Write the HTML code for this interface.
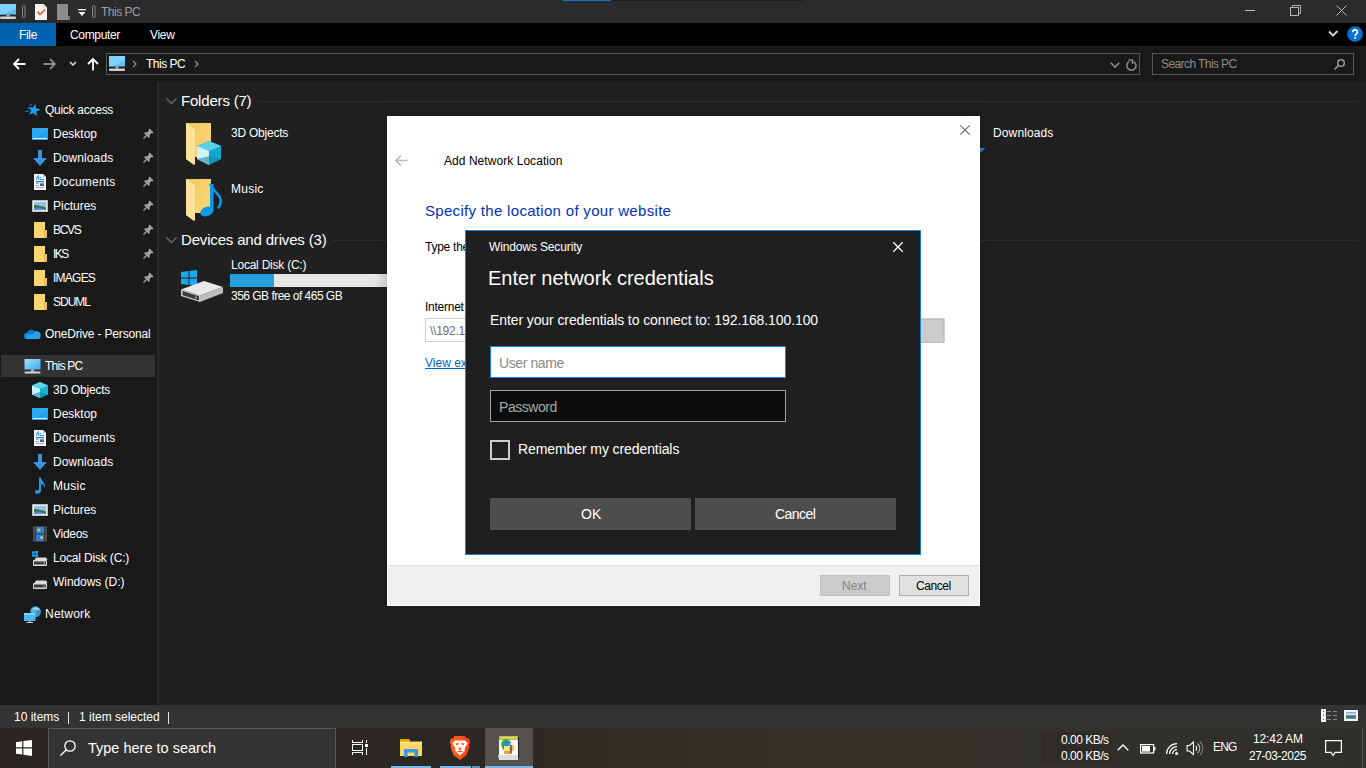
<!DOCTYPE html>
<html><head><meta charset="utf-8">
<style>
*{margin:0;padding:0;box-sizing:border-box}
html,body{width:1366px;height:768px;overflow:hidden;background:#202020;font-family:"Liberation Sans",sans-serif;font-size:12px;color:#fff}
.a{position:absolute}
.t{position:absolute;white-space:nowrap;line-height:1}
svg{position:absolute;overflow:visible}
</style></head><body>
<div class="a" style="left:0px;top:0px;width:1366px;height:23px;background:#2b2b2b;"></div>
<div class="a" style="left:563px;top:0px;width:48px;height:1px;background:#0a78d4;"></div>
<div class="a" style="left:611px;top:0px;width:193px;height:1px;background:#1f1f1f;"></div>
<div class="a" style="left:0px;top:23px;width:1366px;height:23px;background:#000;"></div>
<div class="a" style="left:0px;top:23px;width:56px;height:23px;background:#0063b1;"></div>
<svg style="left:0px;top:4px" width="16" height="16" viewBox="0 0 16 16"><rect x="0" y="0" width="16" height="10.5" fill="#59c2f7"/><path d="M0 0h16v4 L4 10.5 h-4z" fill="#8fdaff" opacity=".7"/><rect x="6.5" y="10.5" width="3" height="2" fill="#bbb"/><rect x="0" y="12.5" width="16" height="2.5" rx="1" fill="#cfcfcf"/></svg>
<svg style="left:22px;top:5px" width="4" height="13" viewBox="0 0 4 13"><rect x="0.5" y="0.5" width="2.5" height="12" rx="1.2" fill="none" stroke="#8a8a8a" stroke-width="1"/></svg>
<svg style="left:92px;top:5px" width="4" height="13" viewBox="0 0 4 13"><rect x="0.5" y="0.5" width="2.5" height="12" rx="1.2" fill="none" stroke="#8a8a8a" stroke-width="1"/></svg>
<svg style="left:35px;top:4px" width="12" height="16" viewBox="0 0 12 16"><path d="M0 0h8.5l3.5 3.5v12.5h-12z" fill="#f2f2f2"/><path d="M8.5 0v3.5h3.5" fill="#d8d8d8"/><path d="M2.5 7.5 L5 10.5 L10 5.5" fill="none" stroke="#f25a22" stroke-width="1.6"/></svg>
<svg style="left:57px;top:4px" width="13" height="16" viewBox="0 0 13 16"><path d="M0 0h11v12h2v4h-13z" fill="#8c8c8c"/><path d="M10.5 12.5h2.5v3.5h-2.5z" fill="#7a7a7a"/></svg>
<svg style="left:78px;top:9px" width="8" height="8" viewBox="0 0 8 8"><rect x="0" y="0" width="8" height="1.3" fill="#fff"/><path d="M0.5 3 L7.5 3 L4 7z" fill="#fff"/></svg>
<div class="t" style="left:101px;top:6px;font-size:12px;color:#9d9d9d;letter-spacing:-0.500px;">This PC</div>
<div class="a" style="left:1245px;top:10px;width:10px;height:1px;background:#c0c0c0;"></div>
<svg style="left:1290px;top:5px" width="11" height="11" viewBox="0 0 11 11"><rect x="0.5" y="2.5" width="8" height="8" fill="none" stroke="#b5b5b5"/><path d="M2.5 2.5 V0.5 H10.5 V8.5 H8.5" fill="none" stroke="#b5b5b5"/></svg>
<svg style="left:1336px;top:5px" width="11" height="11" viewBox="0 0 11 11"><path d="M0.5 0.5 L10.5 10.5 M10.5 0.5 L0.5 10.5" stroke="#c0c0c0" stroke-width="1"/></svg>
<svg style="left:1328px;top:30px" width="11" height="7" viewBox="0 0 11 7"><path d="M1 1.5 L5 5.5 L9.5 1" fill="none" stroke="#cccccc" stroke-width="2"/></svg>
<svg style="left:1347px;top:26px" width="16" height="16" viewBox="0 0 16 16"><circle cx="8" cy="8" r="7.8" fill="#0a6fd0"/><path d="M5.7 6.2 C5.7 3.2 10.5 3.2 10.5 6 C10.5 7.8 8.2 8 8.2 10" fill="none" stroke="#fff" stroke-width="1.7"/><rect x="7.3" y="11" width="1.8" height="1.8" fill="#fff"/></svg>
<div class="t" style="left:19px;top:29px;font-size:12px;color:#fff;letter-spacing:-0.333px;">File</div>
<div class="t" style="left:70px;top:29px;font-size:12px;color:#fff;letter-spacing:-0.343px;">Computer</div>
<div class="t" style="left:150px;top:29px;font-size:12px;color:#fff;letter-spacing:-0.333px;">View</div>
<div class="a" style="left:0px;top:46px;width:1366px;height:36px;background:#191919;"></div>
<svg style="left:13px;top:58px" width="13" height="12" viewBox="0 0 13 12"><path d="M6 1 L1 6 L6 11 M1 6 H12.5" fill="none" stroke="#fff" stroke-width="1.8"/></svg>
<svg style="left:43px;top:58px" width="13" height="12" viewBox="0 0 13 12"><path d="M7 1 L12 6 L7 11 M12 6 H0.5" fill="none" stroke="#8a8a8a" stroke-width="1.8"/></svg>
<svg style="left:69px;top:61px" width="8" height="5" viewBox="0 0 8 5"><path d="M1 1 L4 4 L7 1" fill="none" stroke="#e0e0e0" stroke-width="1.5"/></svg>
<svg style="left:87px;top:58px" width="12" height="13" viewBox="0 0 12 13"><path d="M1 6 L6 1 L11 6 M6 1 V12.5" fill="none" stroke="#fff" stroke-width="1.8"/></svg>
<div class="a" style="left:106px;top:53px;width:1034px;height:22px;border:1px solid #575757;background:#191919"></div>
<svg style="left:109px;top:56px" width="16" height="16" viewBox="0 0 16 16"><rect x="0" y="0" width="16" height="10.5" fill="#59c2f7"/><path d="M0 0h16v4 L4 10.5 h-4z" fill="#8fdaff" opacity=".7"/><rect x="6.5" y="10.5" width="3" height="2" fill="#bbb"/><rect x="0" y="12.5" width="16" height="2.5" rx="1" fill="#cfcfcf"/></svg>
<svg style="left:132px;top:60px" width="5" height="8" viewBox="0 0 5 8"><path d="M1 1 L4 4 L1 7" fill="none" stroke="#8a8a8a" stroke-width="1.3"/></svg>
<div class="t" style="left:146px;top:58px;font-size:12px;color:#fff;letter-spacing:-0.500px;">This PC</div>
<svg style="left:194px;top:60px" width="5" height="8" viewBox="0 0 5 8"><path d="M1 1 L4 4 L1 7" fill="none" stroke="#8a8a8a" stroke-width="1.3"/></svg>
<svg style="left:1110px;top:62px" width="10" height="6" viewBox="0 0 10 6"><path d="M0.8 0.8 L5 5 L9.2 0.8" fill="none" stroke="#8c8c8c" stroke-width="1.6"/></svg>
<div class="a" style="left:1122px;top:54px;width:1px;height:20px;background:#141414;"></div>
<svg style="left:1126px;top:59px" width="12" height="12" viewBox="0 0 12 12"><path d="M7.6 2.6 A4.6 4.6 0 1 1 3.2 2.6" fill="none" stroke="#8c8c8c" stroke-width="1.5"/><path d="M2.5 1 H6.5 V5" fill="none" stroke="#8c8c8c" stroke-width="1.5"/></svg>
<div class="a" style="left:1152px;top:53px;width:202px;height:22px;border:1px solid #575757;background:#191919"></div>
<div class="t" style="left:1161px;top:58px;font-size:12px;color:#8c8c8c;letter-spacing:-0.585px;">Search This PC</div>
<svg style="left:1333px;top:58px" width="12" height="12" viewBox="0 0 12 12"><circle cx="8" cy="5" r="3.3" fill="none" stroke="#9a9a9a" stroke-width="1.5"/><path d="M5.6 7.4 L1.5 11.5" stroke="#9a9a9a" stroke-width="1.6"/></svg>
<div class="a" style="left:0px;top:82px;width:157px;height:623px;background:#191919;"></div>
<div class="a" style="left:157px;top:82px;width:2px;height:623px;background:#282828;"></div>
<div class="a" style="left:159px;top:82px;width:1207px;height:623px;background:#202020;"></div>
<div class="a" style="left:1px;top:355px;width:154px;height:22px;background:#333333;"></div>
<svg style="left:25px;top:103px" width="16" height="14" viewBox="0 0 16 14"><path d="M10.37 0.74 L11.08 5.33 L15.56 6.51 L11.42 8.60 L11.68 13.23 L8.42 9.94 L4.10 11.62 L6.22 7.49 L3.28 3.90 L7.86 4.64Z" fill="#1e9ff2"/><path d="M4.5 2.3 L7 1.8 M2.5 5.5 L5.5 5 M0.5 8.5 L4 8" stroke="#1e9ff2" stroke-width="1" opacity=".8"/></svg>
<div class="t" style="left:45px;top:104px;font-size:12px;color:#fff;letter-spacing:-0.273px;">Quick access</div>
<svg style="left:32px;top:128px" width="16" height="12" viewBox="0 0 16 12"><rect x="0" y="0" width="16" height="12" fill="#1ea1f1"/><path d="M0 0 L16 0 L16 2 L2 12 L0 12Z" fill="#36aff5" opacity=".6"/><rect x="1" y="10" width="14" height="1" fill="#e8f6ff"/></svg>
<div class="t" style="left:53px;top:128px;font-size:12px;color:#fff;letter-spacing:0.000px;">Desktop</div>
<svg style="left:143px;top:128px" width="11" height="11" viewBox="0 0 11 11"><path d="M6.5 0.5 L10.5 4.5 L9.5 5.5 L8.5 5 L6.5 7 L6.8 9 L5.8 10 L1 5.2 L2 4.2 L4 4.5 L6 2.5 L5.5 1.5Z" fill="#9ea5aa"/><path d="M3.5 7.5 L0.5 10.5" stroke="#9ea5aa" stroke-width="1.2"/></svg>
<svg style="left:32px;top:150px" width="16" height="16" viewBox="0 0 16 16"><path d="M6 0h4v8h5l-7 8l-7-8h5z" fill="#3d92e0"/></svg>
<div class="t" style="left:53px;top:152px;font-size:12px;color:#fff;letter-spacing:0.100px;">Downloads</div>
<svg style="left:143px;top:152px" width="11" height="11" viewBox="0 0 11 11"><path d="M6.5 0.5 L10.5 4.5 L9.5 5.5 L8.5 5 L6.5 7 L6.8 9 L5.8 10 L1 5.2 L2 4.2 L4 4.5 L6 2.5 L5.5 1.5Z" fill="#9ea5aa"/><path d="M3.5 7.5 L0.5 10.5" stroke="#9ea5aa" stroke-width="1.2"/></svg>
<svg style="left:34px;top:174px" width="12" height="16" viewBox="0 0 12 16"><path d="M0 0h9l3 3v13h-12z" fill="#f6f6f6"/><path d="M9 0v3h3z" fill="#cfcfcf"/><path d="M2 6 L4 1.5 L5 6" fill="none" stroke="#1e8fe0" stroke-width="1"/><rect x="6" y="3" width="1" height="1" fill="#1e8fe0"/><rect x="6" y="5" width="4" height="1" fill="#1e8fe0"/><rect x="2" y="7" width="8" height="1.2" fill="#0a78d4"/><rect x="2" y="9" width="2.5" height="1" fill="#999"/><rect x="2" y="11" width="2.5" height="1" fill="#999"/><rect x="2" y="13" width="8" height="1" fill="#aaa"/><rect x="6" y="9" width="4" height="3" fill="#3f7a55"/><rect x="6" y="9" width="4" height="1" fill="#5aa0e0"/></svg>
<div class="t" style="left:53px;top:176px;font-size:12px;color:#fff;letter-spacing:0.200px;">Documents</div>
<svg style="left:143px;top:176px" width="11" height="11" viewBox="0 0 11 11"><path d="M6.5 0.5 L10.5 4.5 L9.5 5.5 L8.5 5 L6.5 7 L6.8 9 L5.8 10 L1 5.2 L2 4.2 L4 4.5 L6 2.5 L5.5 1.5Z" fill="#9ea5aa"/><path d="M3.5 7.5 L0.5 10.5" stroke="#9ea5aa" stroke-width="1.2"/></svg>
<svg style="left:32px;top:200px" width="16" height="12" viewBox="0 0 16 12"><rect x="0" y="0" width="16" height="12" fill="#ececec"/><rect x="0.5" y="0.5" width="15" height="11" fill="none" stroke="#9a9a9a" stroke-width=".6"/><rect x="2" y="2" width="12" height="8" fill="#8cc4ef"/><path d="M2 5 Q6 4.5 14 7.5 V10 H2z" fill="#3f7350"/><path d="M2 8 Q8 7 14 9.5 V10 H2z" fill="#5a8fd0"/></svg>
<div class="t" style="left:53px;top:200px;font-size:12px;color:#fff;letter-spacing:0.000px;">Pictures</div>
<svg style="left:143px;top:200px" width="11" height="11" viewBox="0 0 11 11"><path d="M6.5 0.5 L10.5 4.5 L9.5 5.5 L8.5 5 L6.5 7 L6.8 9 L5.8 10 L1 5.2 L2 4.2 L4 4.5 L6 2.5 L5.5 1.5Z" fill="#9ea5aa"/><path d="M3.5 7.5 L0.5 10.5" stroke="#9ea5aa" stroke-width="1.2"/></svg>
<svg style="left:34px;top:222px" width="14" height="16" viewBox="0 0 14 16"><path d="M0 0h11v14h2v2h-13z" fill="#f9d56f"/><path d="M10 8 h3 v8 h-3z" fill="#eec158"/><path d="M11 9 L11 16" stroke="#d7a945" stroke-width=".6"/></svg>
<div class="t" style="left:53px;top:224px;font-size:12px;color:#fff;letter-spacing:-1.333px;">BCVS</div>
<svg style="left:143px;top:224px" width="11" height="11" viewBox="0 0 11 11"><path d="M6.5 0.5 L10.5 4.5 L9.5 5.5 L8.5 5 L6.5 7 L6.8 9 L5.8 10 L1 5.2 L2 4.2 L4 4.5 L6 2.5 L5.5 1.5Z" fill="#9ea5aa"/><path d="M3.5 7.5 L0.5 10.5" stroke="#9ea5aa" stroke-width="1.2"/></svg>
<svg style="left:34px;top:246px" width="14" height="16" viewBox="0 0 14 16"><path d="M0 0h11v14h2v2h-13z" fill="#f9d56f"/><path d="M10 8 h3 v8 h-3z" fill="#eec158"/><path d="M11 9 L11 16" stroke="#d7a945" stroke-width=".6"/></svg>
<div class="t" style="left:53px;top:248px;font-size:12px;color:#fff;letter-spacing:-1.500px;">IKS</div>
<svg style="left:143px;top:248px" width="11" height="11" viewBox="0 0 11 11"><path d="M6.5 0.5 L10.5 4.5 L9.5 5.5 L8.5 5 L6.5 7 L6.8 9 L5.8 10 L1 5.2 L2 4.2 L4 4.5 L6 2.5 L5.5 1.5Z" fill="#9ea5aa"/><path d="M3.5 7.5 L0.5 10.5" stroke="#9ea5aa" stroke-width="1.2"/></svg>
<svg style="left:34px;top:270px" width="14" height="16" viewBox="0 0 14 16"><path d="M0 0h11v14h2v2h-13z" fill="#f9d56f"/><path d="M10 8 h3 v8 h-3z" fill="#eec158"/><path d="M11 9 L11 16" stroke="#d7a945" stroke-width=".6"/></svg>
<div class="t" style="left:53px;top:272px;font-size:12px;color:#fff;letter-spacing:-0.760px;">IMAGES</div>
<svg style="left:143px;top:272px" width="11" height="11" viewBox="0 0 11 11"><path d="M6.5 0.5 L10.5 4.5 L9.5 5.5 L8.5 5 L6.5 7 L6.8 9 L5.8 10 L1 5.2 L2 4.2 L4 4.5 L6 2.5 L5.5 1.5Z" fill="#9ea5aa"/><path d="M3.5 7.5 L0.5 10.5" stroke="#9ea5aa" stroke-width="1.2"/></svg>
<svg style="left:34px;top:294px" width="14" height="16" viewBox="0 0 14 16"><path d="M0 0h11v14h2v2h-13z" fill="#f9d56f"/><path d="M10 8 h3 v8 h-3z" fill="#eec158"/><path d="M11 9 L11 16" stroke="#d7a945" stroke-width=".6"/></svg>
<div class="t" style="left:53px;top:296px;font-size:12px;color:#fff;letter-spacing:-1.000px;">SDUML</div>
<svg style="left:24px;top:328px" width="17" height="11" viewBox="0 0 17 11"><path d="M3 11 A3 3 0 0 1 2.5 5 A5 5 0 0 1 11 3.5 A3.5 3.5 0 0 1 16 7.5 A3 3 0 0 1 14 11z" fill="#0f78d4"/><path d="M3 11 A3 3 0 0 1 3 6.5 L9 6.5 A3.5 3.5 0 0 1 16.5 8.5 A2.5 2.5 0 0 1 14 11z" fill="#2aa1ec"/></svg>
<div class="t" style="left:45px;top:328px;font-size:12px;color:#fff;letter-spacing:-0.167px;">OneDrive - Personal</div>
<svg style="left:24px;top:359px" width="17" height="16" viewBox="0 0 17 16"><defs><linearGradient id="pcg" x1="0" y1="0" x2="1" y2="1"><stop offset="0" stop-color="#9fe0ff"/><stop offset="1" stop-color="#3aaef0"/></linearGradient></defs><rect x="0.5" y="0" width="16" height="10.5" fill="url(#pcg)"/><rect x="7" y="10.5" width="3" height="2" fill="#c8c8c8"/><rect x="0.5" y="12.5" width="16" height="2" rx="1" fill="#d8d8d8"/></svg>
<div class="t" style="left:45px;top:360px;font-size:12px;color:#fff;letter-spacing:-0.733px;">This PC</div>
<svg style="left:32px;top:382px" width="16" height="16" viewBox="0 0 16 16"><path d="M8 0 L16 3.5 L16 12.5 L8 16 L0 12.5 L0 3.5Z" fill="#19b3d2"/><path d="M8 0 L16 3.5 L8 7 L0 3.5Z" fill="#5fd3ea"/><path d="M0 3.5 L8 7 L8 16 L0 12.5Z" fill="#c9f1f8"/><path d="M8 10 L16 12.5 L8 16 L0 12.5Z" fill="#0d8ca9" opacity=".6"/></svg>
<div class="t" style="left:53px;top:384px;font-size:12px;color:#fff;letter-spacing:-0.222px;">3D Objects</div>
<svg style="left:32px;top:408px" width="16" height="12" viewBox="0 0 16 12"><rect x="0" y="0" width="16" height="12" fill="#1ea1f1"/><path d="M0 0 L16 0 L16 2 L2 12 L0 12Z" fill="#36aff5" opacity=".6"/><rect x="1" y="10" width="14" height="1" fill="#e8f6ff"/></svg>
<div class="t" style="left:53px;top:408px;font-size:12px;color:#fff;letter-spacing:0.000px;">Desktop</div>
<svg style="left:34px;top:430px" width="12" height="16" viewBox="0 0 12 16"><path d="M0 0h9l3 3v13h-12z" fill="#f6f6f6"/><path d="M9 0v3h3z" fill="#cfcfcf"/><path d="M2 6 L4 1.5 L5 6" fill="none" stroke="#1e8fe0" stroke-width="1"/><rect x="6" y="3" width="1" height="1" fill="#1e8fe0"/><rect x="6" y="5" width="4" height="1" fill="#1e8fe0"/><rect x="2" y="7" width="8" height="1.2" fill="#0a78d4"/><rect x="2" y="9" width="2.5" height="1" fill="#999"/><rect x="2" y="11" width="2.5" height="1" fill="#999"/><rect x="2" y="13" width="8" height="1" fill="#aaa"/><rect x="6" y="9" width="4" height="3" fill="#3f7a55"/><rect x="6" y="9" width="4" height="1" fill="#5aa0e0"/></svg>
<div class="t" style="left:53px;top:432px;font-size:12px;color:#fff;letter-spacing:0.200px;">Documents</div>
<svg style="left:32px;top:454px" width="16" height="16" viewBox="0 0 16 16"><path d="M6 0h4v8h5l-7 8l-7-8h5z" fill="#3d92e0"/></svg>
<div class="t" style="left:53px;top:456px;font-size:12px;color:#fff;letter-spacing:0.100px;">Downloads</div>
<svg style="left:34px;top:477px" width="12" height="17" viewBox="0 0 12 17"><path d="M5 0.5 L7 0.5 C7 4 12 6 11 11 C10.5 8 8.5 7 7 7 L7 14 C7 16 4 17.3 2 16.6 C0 16 0.5 13.5 3 13 C4 12.8 5 13 5 13z" fill="#1a9ae8"/></svg>
<div class="t" style="left:53px;top:480px;font-size:12px;color:#fff;letter-spacing:0.300px;">Music</div>
<svg style="left:32px;top:504px" width="16" height="12" viewBox="0 0 16 12"><rect x="0" y="0" width="16" height="12" fill="#ececec"/><rect x="0.5" y="0.5" width="15" height="11" fill="none" stroke="#9a9a9a" stroke-width=".6"/><rect x="2" y="2" width="12" height="8" fill="#8cc4ef"/><path d="M2 5 Q6 4.5 14 7.5 V10 H2z" fill="#3f7350"/><path d="M2 8 Q8 7 14 9.5 V10 H2z" fill="#5a8fd0"/></svg>
<div class="t" style="left:53px;top:504px;font-size:12px;color:#fff;letter-spacing:0.000px;">Pictures</div>
<svg style="left:33px;top:526px" width="14" height="16" viewBox="0 0 14 16"><rect x="0" y="0" width="14" height="16" fill="#3a3a3a"/><rect x="3" y="1" width="8" height="6.5" fill="#2f7ed8"/><rect x="3" y="8.5" width="8" height="6.5" fill="#2f7ed8"/><circle cx="6" cy="4" r="1.5" fill="#e8c040"/><circle cx="8.5" cy="11.5" r="1.5" fill="#e8c040"/><path d="M1 1.5v13M13 1.5v13" stroke="#888" stroke-dasharray="1 1" stroke-width="1"/></svg>
<div class="t" style="left:53px;top:528px;font-size:12px;color:#fff;letter-spacing:-0.280px;">Videos</div>
<svg style="left:32px;top:551px" width="16" height="15" viewBox="0 0 16 15"><path d="M0 0.5 L2.8 0.2 V2.8 H0z M3.3 0.1 L6 0 V2.8 H3.3z M0 3.3 H2.8 V5.9 L0 5.6z M3.3 3.3 H6 V6 L3.3 5.9z" fill="#1aa8ee"/><path d="M2.5 9 L4 6.5 L14 6.5 L15.5 9z" fill="#dedede"/><rect x="1" y="9" width="14" height="6" rx="1" fill="#d9d9d9"/><rect x="2" y="10.5" width="12" height="3" fill="#3a3a3a"/><rect x="11.5" y="11.3" width="1.5" height="1.5" fill="#4cd65c"/></svg>
<div class="t" style="left:53px;top:552px;font-size:12px;color:#fff;letter-spacing:-0.171px;">Local Disk (C:)</div>
<svg style="left:32px;top:580px" width="16" height="9" viewBox="0 0 16 9"><path d="M2.5 3 L4 0.5 L14 0.5 L15.5 3z" fill="#dedede"/><rect x="1" y="3" width="14" height="6" rx="1" fill="#d9d9d9"/><rect x="2" y="4.5" width="12" height="3" fill="#3a3a3a"/><rect x="11.5" y="5.3" width="1.5" height="1.5" fill="#4cd65c"/></svg>
<div class="t" style="left:53px;top:576px;font-size:12px;color:#fff;letter-spacing:-0.055px;">Windows (D:)</div>
<svg style="left:23px;top:606px" width="18" height="17" viewBox="0 0 18 17"><circle cx="12.5" cy="5.8" r="5.5" fill="#3f8fc9"/><path d="M8 3.5 A5.5 5.5 0 0 1 17.5 4.5 C15 3.5 11 4 8 3.5z" fill="#9fd6f5"/><circle cx="11" cy="4.5" r="2.5" fill="#7cc3ee" opacity=".6"/><rect x="1" y="7" width="11.5" height="8" fill="#4cb8f5"/><rect x="1" y="7" width="11.5" height="2" fill="#7fd0fa"/><rect x="6" y="15" width="1.5" height="1" fill="#bbb"/><rect x="3.5" y="16" width="6.5" height="1" fill="#d0d0d0"/></svg>
<div class="t" style="left:45px;top:608px;font-size:12px;color:#fff;letter-spacing:0.217px;">Network</div>
<svg style="left:166px;top:98px" width="11" height="7" viewBox="0 0 11 7"><path d="M0.5 0.5 L5.5 5.5 L10.5 0.5" fill="none" stroke="#6a6a6a" stroke-width="1.3"/></svg>
<div class="t" style="left:181px;top:93px;font-size:15px;color:#fff;letter-spacing:-0.190px;">Folders (7)</div>
<div class="a" style="left:258px;top:101px;width:1100px;height:1px;background:#2f2f2f;"></div>
<svg style="left:166px;top:237px" width="11" height="7" viewBox="0 0 11 7"><path d="M0.5 0.5 L5.5 5.5 L10.5 0.5" fill="none" stroke="#6a6a6a" stroke-width="1.3"/></svg>
<div class="t" style="left:181px;top:232px;font-size:15px;color:#fff;letter-spacing:-0.171px;">Devices and drives (3)</div>
<div class="a" style="left:333px;top:240px;width:1025px;height:1px;background:#2f2f2f;"></div>
<svg style="left:186px;top:123px" width="36" height="42" viewBox="0 0 36 42"><defs><linearGradient id="fg123" x1="0" y1="0" x2="1" y2="1"><stop offset="0" stop-color="#f2c65e"/><stop offset="1" stop-color="#fddc7e"/></linearGradient></defs><path d="M0 0 H25 V34 H8 V42 L0 36Z" fill="url(#fg123)"/><path d="M0 0 L9 7 L9 42 L0 36Z" fill="#fde39c"/><path d="M0 0 L9 7 L9 8 L0 1.5Z" fill="#fff0c0" opacity=".6"/></svg>
<svg style="left:197px;top:141px" width="24" height="24" viewBox="0 0 24 24"><path d="M12 0 L24 5 L24 18 L12 24 L0 18 L0 5Z" fill="#12a9cf"/><path d="M12 0 L24 5 L12 10 L0 5Z" fill="#5bd0e9"/><path d="M0 5 L12 10 L12 24 L0 18Z" fill="#d0f2f8"/><path d="M12 15 L24 18 L12 24 L0 18Z" fill="#0b86a4" opacity=".55"/></svg>
<div class="t" style="left:231px;top:127px;font-size:12px;color:#fff;letter-spacing:-0.222px;">3D Objects</div>
<svg style="left:186px;top:179px" width="36" height="42" viewBox="0 0 36 42"><defs><linearGradient id="fg179" x1="0" y1="0" x2="1" y2="1"><stop offset="0" stop-color="#f2c65e"/><stop offset="1" stop-color="#fddc7e"/></linearGradient></defs><path d="M0 0 H25 V34 H8 V42 L0 36Z" fill="url(#fg179)"/><path d="M0 0 L9 7 L9 42 L0 36Z" fill="#fde39c"/><path d="M0 0 L9 7 L9 8 L0 1.5Z" fill="#fff0c0" opacity=".6"/></svg>
<svg style="left:198px;top:183px" width="25" height="36" viewBox="0 0 25 36"><rect x="12" y="1" width="3.5" height="27" fill="#0a98ea"/><path d="M12.5 1.5 C14 8 23.5 11 22.8 19 C22.5 21.5 21.8 23 20.5 24.5" fill="none" stroke="#0a98ea" stroke-width="2.6" stroke-linecap="round"/><ellipse cx="8.8" cy="28.5" rx="6.8" ry="4.6" transform="rotate(-22 8.8 28.5)" fill="#0a98ea"/></svg>
<div class="t" style="left:231px;top:183px;font-size:12px;color:#fff;letter-spacing:0.250px;">Music</div>
<svg style="left:980px;top:148px" width="6" height="5" viewBox="0 0 6 5"><path d="M0 0 H5.5 L0 5z" fill="#2f86d6"/></svg>
<div class="t" style="left:993px;top:127px;font-size:12px;color:#fff;letter-spacing:0.125px;">Downloads</div>
<svg style="left:181px;top:270px" width="43" height="33" viewBox="0 0 43 33"><path d="M0 2 L7.5 1 V7.5 H0z M8.5 0.9 L16 0 V7.5 H8.5z M0 8.5 H7.5 V15 L0 14z M8.5 8.5 H16 V16 L8.5 15.1z" fill="#1aa8ee"/>
<path d="M0 19.5 L23 11 L42 17 L19 25.5Z" fill="#e9e9e9"/>
<path d="M19 25.5 L42 17 L42 23 L19 32Z" fill="#bdbdbd"/>
<path d="M0 19.5 L19 25.5 L19 32 L0 26Z" fill="#cfcfcf"/>
<path d="M1.5 21 L18 26.3 L18 30.5 L1.5 25.2Z" fill="#3c3c3c"/>
<circle cx="15" cy="27.5" r="1" fill="#4fe04f"/></svg>
<div class="t" style="left:231px;top:259px;font-size:12px;color:#fff;letter-spacing:-0.229px;">Local Disk (C:)</div>
<div class="a" style="left:230px;top:274px;width:160px;height:13px;background:#e6e6e6;"></div>
<div class="a" style="left:230px;top:274px;width:44px;height:13px;background:#26a0da;"></div>
<div class="t" style="left:231px;top:290px;font-size:12px;color:#fff;letter-spacing:-0.520px;">356 GB free of 465 GB</div>
<div class="a" style="left:0px;top:705px;width:1366px;height:23px;background:#333333;"></div>
<div class="t" style="left:14px;top:711px;font-size:12px;color:#fff;letter-spacing:0.000px;">10 items</div>
<div class="a" style="left:68px;top:712px;width:1px;height:12px;background:#e0e0e0;"></div>
<div class="t" style="left:79px;top:711px;font-size:12px;color:#fff;letter-spacing:0.000px;">1 item selected</div>
<div class="a" style="left:168px;top:712px;width:1px;height:12px;background:#e0e0e0;"></div>
<div class="a" style="left:1321px;top:709px;width:5px;height:13px;background:#f4f4f4;"></div>
<div class="a" style="left:1323px;top:711px;width:1px;height:1px;background:#3a7a5a;"></div>
<div class="a" style="left:1323px;top:715px;width:1px;height:1px;background:#3a7ae0;"></div>
<div class="a" style="left:1323px;top:719px;width:1px;height:1px;background:#e02020;"></div>
<div class="a" style="left:1327px;top:711px;width:4px;height:1px;background:#8a8a8a;"></div>
<div class="a" style="left:1333px;top:711px;width:4px;height:1px;background:#8a8a8a;"></div>
<div class="a" style="left:1327px;top:715px;width:4px;height:1px;background:#8a8a8a;"></div>
<div class="a" style="left:1333px;top:715px;width:4px;height:1px;background:#8a8a8a;"></div>
<div class="a" style="left:1327px;top:719px;width:4px;height:1px;background:#8a8a8a;"></div>
<div class="a" style="left:1333px;top:719px;width:4px;height:1px;background:#8a8a8a;"></div>
<div class="a" style="left:1344px;top:710px;width:14px;height:11px;background:#f4f4f4;"></div>
<div class="a" style="left:1346px;top:712px;width:10px;height:7px;background:linear-gradient(#5a9ef0 0,#d8ecff 35%,#3f7350 55%,#6090c0 100%)"></div>
<div class="a" style="left:0;top:728px;width:1366px;height:40px;background:linear-gradient(to right,#2a2621 0px,#2b2722 480px,#2f2c24 620px,#35322a 800px,#35322b 950px,#33312d 1040px,#302e2a 1366px)"></div>
<div class="a" style="left:48px;top:728px;width:288px;height:40px;border:1px solid #5a5a5a;border-bottom:none;background:#333333"></div>
<svg style="left:16px;top:740px" width="16" height="16" viewBox="0 0 16 16"><path d="M0 2.2 L6.2 1.3 V7.2 H0z M7.4 1.1 L16 0 V7.2 H7.4z M0 8.4 H6.2 V14.5 L0 13.7z M7.4 8.4 H16 V16 L7.4 14.8z" fill="#fff"/></svg>
<svg style="left:60px;top:740px" width="16" height="16" viewBox="0 0 16 16"><circle cx="10" cy="6" r="5.2" fill="none" stroke="#fff" stroke-width="1.3"/><path d="M6.3 9.7 L0.5 15.5" stroke="#fff" stroke-width="1.4"/></svg>
<div class="t" style="left:88px;top:741px;font-size:14.5px;color:#fff;letter-spacing:0.000px;">Type here to search</div>
<div class="a" style="left:352px;top:740px;width:1px;height:3px;background:#fff;"></div>
<div class="a" style="left:362px;top:740px;width:1px;height:3px;background:#fff;"></div>
<div class="a" style="left:352px;top:742px;width:11px;height:1px;background:#fff;"></div>
<div class="a" style="left:352px;top:744px;width:11px;height:7px;border:1px solid #fff"></div>
<div class="a" style="left:352px;top:752px;width:11px;height:1px;background:#fff;"></div>
<div class="a" style="left:352px;top:752px;width:1px;height:3px;background:#fff;"></div>
<div class="a" style="left:362px;top:752px;width:1px;height:3px;background:#fff;"></div>
<div class="a" style="left:366px;top:740px;width:1px;height:3px;background:#fff;"></div>
<div class="a" style="left:365px;top:744px;width:3px;height:3px;background:#fff;"></div>
<div class="a" style="left:366px;top:748px;width:1px;height:7px;background:#fff;"></div>
<svg style="left:400px;top:739px" width="22" height="18" viewBox="0 0 22 18"><path d="M0 0 H9 L10 1 V3 H0z" fill="#e6a100"/><path d="M0 2.5 H22 V17 H0z" fill="#fdd663"/><path d="M0 3 H22 V5 H0z" fill="#ffe07a"/><path d="M4 18 V11 Q4 10 5 10 H17 Q18 10 18 11 V18 H14.5 V13.5 H7.5 V18z" fill="#3a96e0"/></svg>
<div class="a" style="left:391px;top:766px;width:40px;height:2px;background:#76b9ed;"></div>
<svg style="left:449px;top:735px" width="22" height="26" viewBox="0 0 22 26"><defs><linearGradient id="bg1" x1="0" x2="1"><stop offset="0" stop-color="#ff6a10"/><stop offset="1" stop-color="#ff3a1a"/></linearGradient></defs><path d="M5.5 1 H15.5 L17.5 3 L20.5 4 L21 7.5 L20 10 L20.5 12 L17.5 20 L11 25 L4.5 20 L1.5 12 L2 10 L1 7.5 L1.5 4 L4.5 3 Z" fill="url(#bg1)"/><path d="M3.5 8 L6 5.5 H16 L18.5 8 L17.5 10.5 L16 12 L15.5 16.5 L13.5 18 L11 20.5 L8.5 18 L6.5 16.5 L6 12 L4.5 10.5 Z" fill="#fff"/><path d="M6.5 8.3 H10 L9.2 9.8 L7.2 10z M15.5 8.3 H12 L12.8 9.8 L14.8 10z M9.8 11.5 L11 13.8 L12.2 11.5 L12.5 14.2 L11 15 L9.5 14.2z M7.5 16.5 L11 15.5 L14.5 16.5 L11 17.5z" fill="#ff4a1a"/></svg>
<div class="a" style="left:440px;top:766px;width:31px;height:2px;background:#76b9ed;"></div>
<div class="a" style="left:472px;top:766px;width:8px;height:2px;background:#5a8fc0;"></div>
<div class="a" style="left:485px;top:728px;width:48px;height:40px;background:#55514c;"></div>
<svg style="left:498px;top:736px" width="22" height="25" viewBox="0 0 22 25"><rect x="1" y="0" width="19" height="4" fill="#c2bb3a"/><rect x="2" y="1.3" width="17" height="1" fill="#f0eca0"/><rect x="1" y="4" width="19" height="16" fill="#f8f8f4"/><rect x="20" y="1" width="1" height="21" fill="#222"/><path d="M0 19 H20 V24 H1z" fill="#dcdcdc"/><path d="M3.5 10 A5 5 0 0 1 13 6.5 L9 11 L5 14z" fill="#32b040"/><circle cx="9" cy="8.5" r="3.5" fill="#2a86e0" opacity=".85"/><rect x="6" y="10" width="7" height="7.5" fill="#f4e48a"/><rect x="6" y="15" width="7" height="3" fill="#d8a848"/><rect x="11" y="9" width="5" height="6" fill="#e8c860"/><path d="M13 17.5 V9" stroke="#111" stroke-width="1"/></svg>
<div class="a" style="left:485px;top:766px;width:48px;height:2px;background:#76b9ed;"></div>
<div class="a" style="left:1041px;top:732px;width:72px;height:32px;background:#2f2c27;"></div>
<div class="t" style="left:1061px;top:734px;font-size:12px;color:#fff;letter-spacing:-0.500px;">0.00 KB/s</div>
<div class="t" style="left:1061px;top:750px;font-size:12px;color:#fff;letter-spacing:-0.500px;">0.00 KB/s</div>
<svg style="left:1117px;top:744px" width="12" height="7" viewBox="0 0 12 7"><path d="M0.7 6.3 L6 1 L11.3 6.3" fill="none" stroke="#fff" stroke-width="1.3"/></svg>
<svg style="left:1140px;top:744px" width="16" height="10" viewBox="0 0 16 10"><rect x="0.6" y="0.6" width="13" height="8.4" fill="none" stroke="#fff" stroke-width="1.2"/><rect x="2" y="2" width="8" height="5.6" fill="#fff"/><rect x="14" y="3" width="1.4" height="3.5" fill="#fff"/></svg>
<svg style="left:1165px;top:742px" width="14" height="14" viewBox="0 0 14 14"><path d="M1.6 12 A10.4 10.4 0 0 1 12 1.6 M4.6 12 A7.4 7.4 0 0 1 12 4.6 M7.6 12 A4.4 4.4 0 0 1 12 7.6" fill="none" stroke="#fff" stroke-width="1.2"/><circle cx="11.6" cy="11.6" r="1.5" fill="#fff"/></svg>
<svg style="left:1186px;top:741px" width="19" height="15" viewBox="0 0 19 15"><path d="M1.1 4.5 H3.5 L7.5 1 V13.5 L3.5 10 H1.1z" fill="none" stroke="#fff" stroke-width="1.1"/><path d="M9.7 5 A3 3 0 0 1 9.7 9.5" fill="none" stroke="#fff" stroke-width="1.1"/><path d="M11.5 2.5 A6 6 0 0 1 11.5 12" fill="none" stroke="#bbb" stroke-width="1.1"/><path d="M13.8 0.5 A9 9 0 0 1 13.8 14" fill="none" stroke="#777" stroke-width="1.1"/></svg>
<div class="t" style="left:1213px;top:741px;font-size:12px;color:#fff;letter-spacing:-0.800px;">ENG</div>
<div class="t" style="left:1253px;top:733px;font-size:12px;color:#fff;letter-spacing:-0.114px;">12:42 AM</div>
<div class="t" style="left:1249px;top:750px;font-size:12px;color:#fff;letter-spacing:-0.444px;">27-03-2025</div>
<svg style="left:1325px;top:740px" width="17" height="17" viewBox="0 0 17 17"><path d="M0.6 0.6 H16.4 V12.4 H10 L8 15.5 L6 12.4 H0.6z" fill="none" stroke="#fff" stroke-width="1.2"/></svg>
<div class="a" style="left:1362px;top:728px;width:1px;height:40px;background:#5a5650;"></div>
<div class="a" style="left:387px;top:116px;width:593px;height:490px;background:#ffffff;box-shadow:0 0 12px 2px rgba(0,0,0,.22)"></div>
<div class="a" style="left:388px;top:565px;width:591px;height:1px;background:#dfdfdf;"></div>
<div class="a" style="left:388px;top:566px;width:591px;height:39px;background:#f0f0f0;"></div>
<svg style="left:960px;top:125px" width="10" height="10" viewBox="0 0 10 10"><path d="M0.3 0.3 L9.7 9.7 M9.7 0.3 L0.3 9.7" stroke="#6a6a6a" stroke-width="1.2"/></svg>
<svg style="left:395px;top:155px" width="13" height="11" viewBox="0 0 13 11"><path d="M6 0.5 L1 5.5 L6 10.5 M1 5.5 H12.5" fill="none" stroke="#b8b8b8" stroke-width="1.6"/></svg>
<div class="t" style="left:444px;top:155px;font-size:12px;color:#000;letter-spacing:0.053px;">Add Network Location</div>
<div class="t" style="left:425px;top:203px;font-size:15px;color:#0033bc;letter-spacing:0.309px;">Specify the location of your website</div>
<div class="t" style="left:425px;top:241px;font-size:12px;color:#000;letter-spacing:-0.25px;">Type the</div>
<div class="t" style="left:425px;top:301px;font-size:12px;color:#000;letter-spacing:-0.25px;">Internet</div>
<div class="a" style="left:425px;top:318px;width:520px;height:24px;border:1px solid #cfcfcf;background:#fff"></div>
<div class="t" style="left:430px;top:325px;font-size:12px;color:#6d6d6d;letter-spacing:-0.25px;">\\192.168.100.100</div>
<div class="t" style="left:425px;top:357px;font-size:12px;color:#0066cc;text-decoration:underline">View examples</div>
<div class="a" style="left:870px;top:319px;width:74px;height:24px;border:1px solid #bfbfbf;background:#cccccc"></div>
<div class="a" style="left:820px;top:575px;width:70px;height:21px;border:1px solid #bfbfbf;background:#cccccc"></div>
<div class="t" style="left:842px;top:580px;font-size:12px;color:#838383;letter-spacing:0.000px;">Next</div>
<div class="a" style="left:899px;top:575px;width:70px;height:21px;border:1px solid #adadad;background:#e1e1e1"></div>
<div class="t" style="left:916px;top:580px;font-size:12px;color:#000;letter-spacing:-0.440px;">Cancel</div>
<div class="a" style="left:465px;top:230px;width:456px;height:325px;background:#1f1f1f;border:1px solid #1883d7"></div>
<div class="t" style="left:489px;top:241px;font-size:12px;color:#fff;letter-spacing:-0.133px;">Windows Security</div>
<svg style="left:893px;top:242px" width="10" height="10" viewBox="0 0 10 10"><path d="M0.3 0.3 L9.7 9.7 M9.7 0.3 L0.3 9.7" stroke="#fff" stroke-width="1.3"/></svg>
<div class="t" style="left:488px;top:268px;font-size:20px;color:#fff;letter-spacing:0.000px;">Enter network credentials</div>
<div class="t" style="left:490px;top:313px;font-size:14px;color:#fff;letter-spacing:-0.096px;">Enter your credentials to connect to: 192.168.100.100</div>
<div class="a" style="left:490px;top:346px;width:296px;height:32px;border:1px solid #1380ea;background:#fff"></div>
<div class="t" style="left:499px;top:356px;font-size:14px;color:#8a8a8a;letter-spacing:-0.400px;">User name</div>
<div class="a" style="left:490px;top:390px;width:296px;height:32px;border:1px solid #a0a0a0;background:#0c0c0c"></div>
<div class="t" style="left:499px;top:400px;font-size:14px;color:#a8a8a8;letter-spacing:-0.457px;">Password</div>
<div class="a" style="left:490px;top:440px;width:20px;height:20px;border:2px solid #cccccc"></div>
<div class="t" style="left:518px;top:442px;font-size:14px;color:#fff;letter-spacing:-0.091px;">Remember my credentials</div>
<div class="a" style="left:490px;top:498px;width:201px;height:32px;background:#4d4d4d;"></div>
<div class="a" style="left:695px;top:498px;width:201px;height:32px;background:#4d4d4d;"></div>
<div class="t" style="left:581px;top:507px;font-size:14px;color:#fff;letter-spacing:0px;">OK</div>
<div class="t" style="left:775px;top:507px;font-size:14px;color:#fff;letter-spacing:-0.560px;">Cancel</div>
</body></html>
